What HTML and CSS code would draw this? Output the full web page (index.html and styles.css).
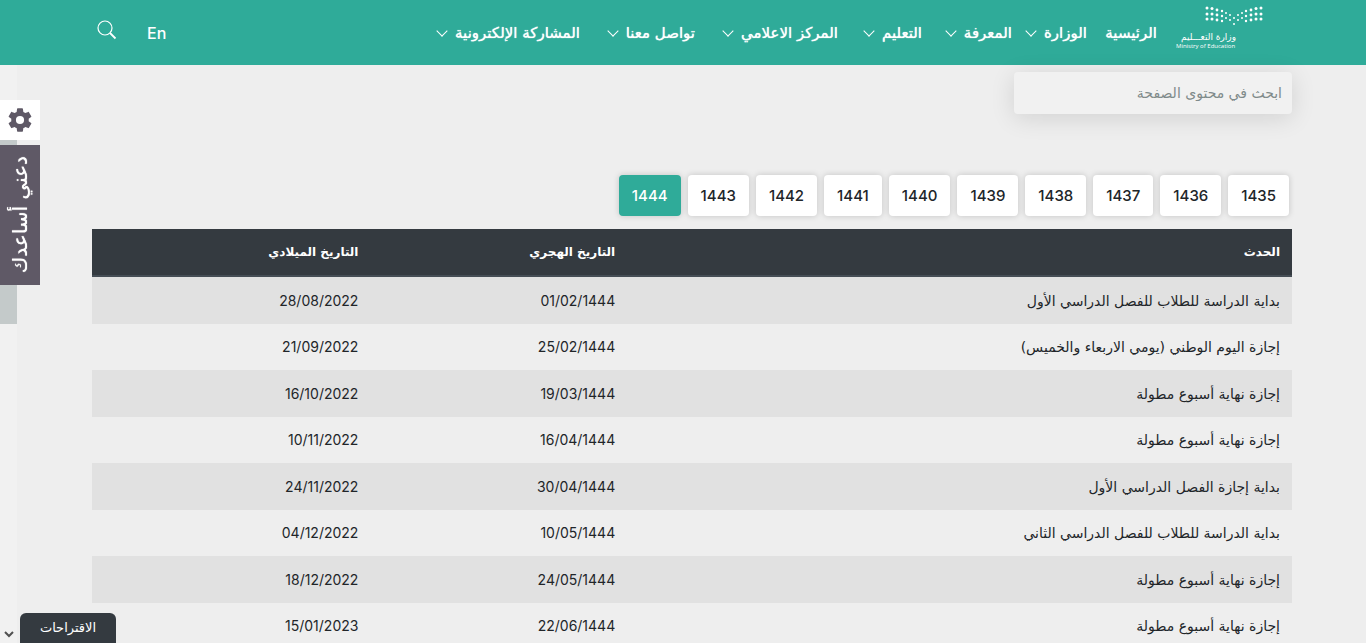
FILE: index.html
```html
<!DOCTYPE html>
<html lang="ar" dir="rtl">
<head>
<meta charset="utf-8">
<title>التقويم الدراسي</title>
<link rel="stylesheet" href="styles.css">
</head>
<body>
<header class="header">
  <a class="logo" href="#" aria-label="وزارة التعليم">
    <svg class="logo-dots" viewBox="0 0 60 20" width="60" height="20" fill="#fff" aria-hidden="true">
      <g id="wing">
        <circle cx="3" cy="3" r="1.5"/><circle cx="3" cy="9" r="1.5"/><circle cx="3" cy="14" r="1.5"/>
        <circle cx="8" cy="3.500" r="1.5"/><circle cx="8" cy="9" r="1.5"/><circle cx="8" cy="14" r="1.5"/>
        <circle cx="13" cy="5" r="1.4"/><circle cx="13" cy="10" r="1.4"/><circle cx="13" cy="15" r="1.4"/>
        <circle cx="18" cy="6" r="1.2"/><circle cx="18" cy="11" r="1.2"/><circle cx="18" cy="16" r="1.2"/>
        <circle cx="22" cy="8" r="1"/><circle cx="22" cy="13" r="1"/>
        <circle cx="26" cy="10" r="1"/><circle cx="26" cy="15" r="1"/>
      </g>
      <use href="#wing" transform="matrix(-1 0 0 1 60 0)"/>
      <circle cx="30" cy="13" r="1"/><circle cx="30" cy="19" r="1"/>
    </svg>
    <span class="logo-ar">وزارة التعـــليم</span>
    <span class="logo-en" lang="en" dir="ltr">Ministry of Education</span>
  </a>
  <nav class="nav" aria-label="القائمة الرئيسية">
    <a href="#">الرئيسية</a>
    <a href="#" class="more">الوزارة</a>
    <a href="#" class="more">المعرفة</a>
    <a href="#" class="more">التعليم</a>
    <a href="#" class="more">المركز الاعلامي</a>
    <a href="#" class="more">تواصل معنا</a>
    <a href="#" class="more">المشاركة الإلكترونية</a>
  </nav>
  <div class="tools">
    <a class="lang" href="#" lang="en">En</a>
    <button class="search-btn" type="button" aria-label="بحث">
      <svg viewBox="0 0 20 20" width="20" height="20" fill="none" stroke="#fff"><circle cx="8" cy="8" r="7" stroke-width="1.2"/><path d="M13 13l5.500 5.500" stroke-width="1.800"/></svg>
    </button>
  </div>
</header>
<main class="content">
  <input class="filter" type="text" aria-label="ابحث في محتوى الصفحة" placeholder="ابحث في محتوى الصفحة">
  <div class="years">
    <button type="button">1435</button>
    <button type="button">1436</button>
    <button type="button">1437</button>
    <button type="button">1438</button>
    <button type="button">1439</button>
    <button type="button">1440</button>
    <button type="button">1441</button>
    <button type="button">1442</button>
    <button type="button">1443</button>
    <button type="button" class="active" aria-pressed="true">1444</button>
  </div>
  <table class="events">
    <thead><tr><th class="col-event">الحدث</th><th class="col-hijri">التاريخ الهجري</th><th>التاريخ الميلادي</th></tr></thead>
    <tbody>
      <tr><td>بداية الدراسة للطلاب للفصل الدراسي الأول</td><td class="date">01/02/1444</td><td class="date">28/08/2022</td></tr>
      <tr><td>إجازة اليوم الوطني (يومي الاربعاء والخميس)</td><td class="date">25/02/1444</td><td class="date">21/09/2022</td></tr>
      <tr><td>إجازة نهاية أسبوع مطولة</td><td class="date">19/03/1444</td><td class="date">16/10/2022</td></tr>
      <tr><td>إجازة نهاية أسبوع مطولة</td><td class="date">16/04/1444</td><td class="date">10/11/2022</td></tr>
      <tr><td>بداية إجازة الفصل الدراسي الأول</td><td class="date">30/04/1444</td><td class="date">24/11/2022</td></tr>
      <tr><td>بداية الدراسة للطلاب للفصل الدراسي الثاني</td><td class="date">10/05/1444</td><td class="date">04/12/2022</td></tr>
      <tr><td>إجازة نهاية أسبوع مطولة</td><td class="date">24/05/1444</td><td class="date">18/12/2022</td></tr>
      <tr><td>إجازة نهاية أسبوع مطولة</td><td class="date">22/06/1444</td><td class="date">15/01/2023</td></tr>
    </tbody>
  </table>
</main>
<div class="track" aria-hidden="true">
  <div class="thumb"></div>
  <svg class="track-arrow" viewBox="0 0 10 8" width="10" height="8" fill="none" stroke="#505050" stroke-width="2"><path d="M1 2l4 4 4-4"/></svg>
</div>
<aside class="side">
  <button class="settings" type="button" aria-label="الإعدادات">
    <svg viewBox="0 0 24 24" width="28" height="28" fill="#5f5966"><path d="M19.430 12.980c.04-.32.07-.64.07-.98s-.03-.66-.07-.98l2.110-1.650c.19-.15.24-.42.12-.64l-2-3.460c-.12-.22-.39-.3-.61-.22l-2.490 1c-.52-.4-1.080-.73-1.690-.98l-.38-2.650A.49.49 0 0 0 14 2h-4c-.25 0-.46.18-.49.42l-.38 2.650c-.61.25-1.170.59-1.690.98l-2.490-1c-.23-.09-.49 0-.61.22l-2 3.460c-.13.22-.07.49.12.64l2.110 1.650c-.04.32-.07.65-.07.98s.03.66.07.98l-2.110 1.650c-.19.15-.24.42-.12.64l2 3.460c.12.22.39.3.61.22l2.490-1c.52.4 1.080.73 1.690.98l.38 2.650c.03.24.24.42.49.42h4c.25 0 .46-.18.49-.42l.38-2.650c.61-.25 1.170-.59 1.690-.98l2.490 1c.23.09.49 0 .61-.22l2-3.460c.12-.22.07-.49-.12-.64zM12 15.500a3.500 3.500 0 1 1 0-7 3.500 3.500 0 0 1 0 7z"/></svg>
  </button>
  <button class="help" type="button"><span>دعني أساعدك</span></button>
</aside>
<button class="suggest" type="button">الاقتراحات</button>
</body>
</html>
```
FILE: styles.css
```css
* { box-sizing: border-box; }
html { height: 100%; overflow: hidden; }
body { margin: 0; height: 100%; background: #eee; color: #212529; font: 14px/20px "DejaVu Sans", sans-serif; }
button { border: 0; padding: 0; font: inherit; color: inherit; cursor: pointer; }
a { color: inherit; text-decoration: none; }

.header { display: flex; height: 65px; padding: 0 102px 0 97px; background: #2fab99; color: #fff; }
.logo { display: flex; flex-direction: column; width: 88px; padding-top: 5px; align-items: flex-end; }
.logo-dots { align-self: flex-start; }
.logo-ar { width: 60px; margin-top: 6px; font-size: 9px; line-height: 12px; white-space: nowrap; }
.logo-en { width: 60px; font: 6px/7px "Open Sans", sans-serif; white-space: nowrap; }
.nav { display: grid; grid-template-columns: 70px 75px 90px 84px 143px 115px 150px; margin-right: 19px; align-items: center; font-size: 15px; text-shadow: 0 0 1px #fff; }
.nav a { display: flex; align-items: center; gap: 9px; white-space: nowrap; }
.more::after { content: ""; width: 7px; height: 7px; margin-bottom: 4px; border: solid #fff; border-width: 0 1px 1px 0; transform: rotate(45deg); }
.tools { display: flex; align-items: center; gap: 30px; margin-right: auto; }
.lang { font: 500 16px/20px Inter, sans-serif; }
.search-btn { display: flex; margin-bottom: 5px; background: none; }

.content { padding: 7px 74px 0 92px; }
.filter { display: block; width: 278px; height: 42px; padding: 0 10px; border: 0; border-radius: 4px; background: #f1f1f1; box-shadow: 0 4px 24px rgba(0, 0, 0, .12); font: inherit; }
.filter::placeholder { color: #7f8a8a; opacity: 1; }
.years { display: flex; gap: 7px; margin: 61px 3px 13px; }
.years button { padding: 0 13px; height: 41px; border-radius: 4px; background: #fff; box-shadow: 0 0 6px rgba(0, 0, 0, .18); font: 500 15px/20px Inter, sans-serif; }
.years .active { background: #2fab99; color: #fff; }

.events { width: 100%; border-collapse: separate; border-spacing: 0; table-layout: fixed; text-align: right; }
.events th, .events td { padding: 0 12px; }
.events th { height: 48px; background: #343a40; border-bottom: 2px solid #454d55; color: #fff; font-size: 12px; font-weight: 700; }
.col-event { width: 55.4%; }
.col-hijri { width: 21.4%; }
.events td { height: 46px; }
.events tbody tr:nth-child(odd) td { height: 47px; background: #e1e1e1; }
.events .date { font: 14px/20px Inter, sans-serif; }

.track { position: fixed; left: 0; top: 65px; bottom: 0; width: 17px; background: #f1f1f1; display: flex; flex-direction: column; justify-content: space-between; align-items: center; padding: 35px 0 5px; }
.thumb { width: 17px; height: 224px; background: #c4caca; }
.side { position: fixed; left: 0; top: 100px; width: 40px; display: flex; flex-direction: column; gap: 5px; }
.settings { display: flex; align-items: center; justify-content: center; height: 40px; background: #fff; }
.help { display: flex; align-items: center; justify-content: center; height: 140px; background: #5f5966; color: #fff; font-size: 20px; text-shadow: 0 0 1px #fff; }
.help span { writing-mode: vertical-rl; transform: rotate(180deg); white-space: nowrap; }
.suggest { position: fixed; left: 20px; bottom: 0; width: 96px; height: 30px; border-radius: 6px 6px 0 0; background: #343a40; color: #fff; font-size: 13px; }
```
